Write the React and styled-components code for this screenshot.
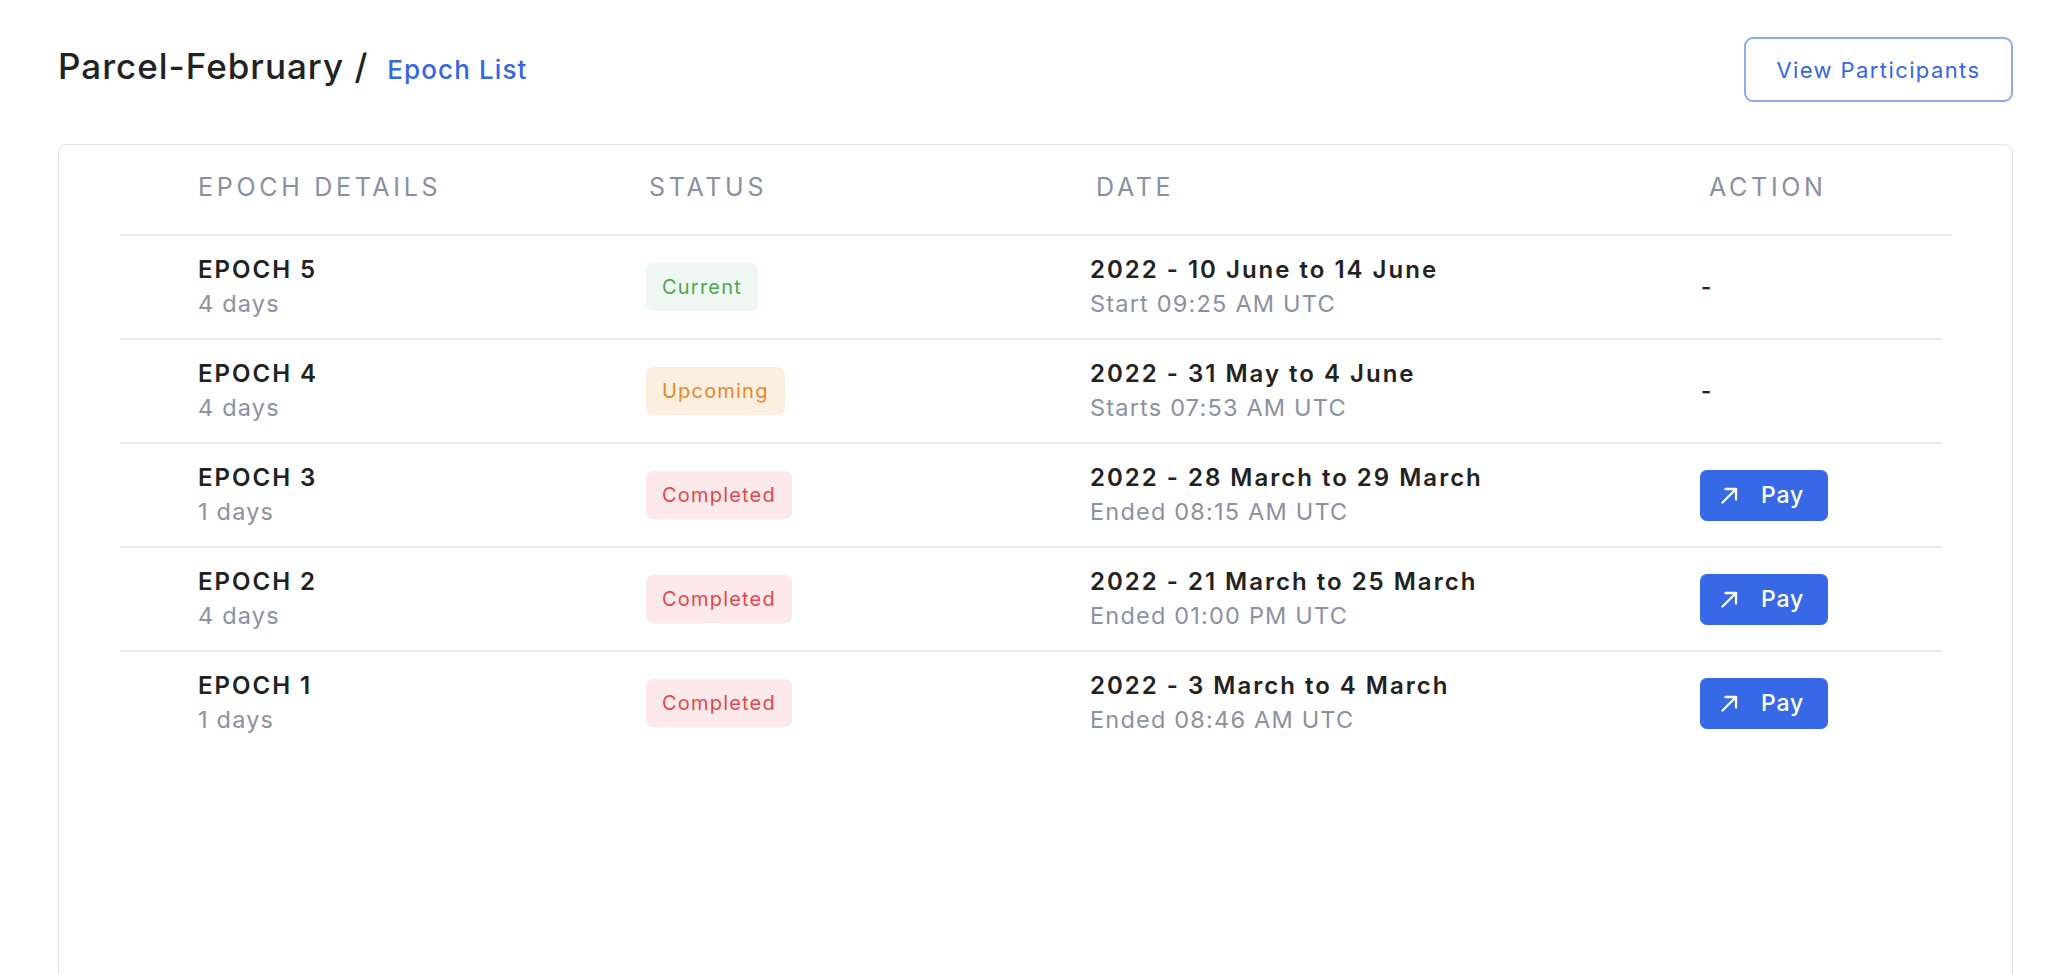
import React from 'react';
import styled, { createGlobalStyle } from 'styled-components';

const GlobalStyle = createGlobalStyle`
  body {
    margin: 0;
    background: #ffffff;
    font-family: Inter, "Noto Sans", sans-serif;
    color: #222222;
  }
`;

const Page = styled.div`
  padding: 37px 49px 0 58px;
`;

const TopBar = styled.div`
  display: flex;
  align-items: center;
  justify-content: space-between;
  height: 65px;
`;

const Breadcrumb = styled.div`
  display: flex;
  align-items: baseline;
  gap: 19px;
  margin-top: -8px;
`;

const Title = styled.h1`
  margin: 0;
  font-size: 35px;
  font-weight: 500;
  letter-spacing: 1px;
  color: #222222;
`;

const Crumb = styled.a`
  font-size: 26px;
  font-weight: 500;
  letter-spacing: 1.1px;
  color: #3566e3;
  text-decoration: none;
`;

const OutlineButton = styled.button`
  width: 269px;
  height: 65px;
  border: 2px solid #8eaaf1;
  border-radius: 9px;
  background: #ffffff;
  color: #3566e3;
  font-family: inherit;
  font-size: 22px;
  font-weight: 400;
  letter-spacing: 1.4px;
  cursor: pointer;
`;

const Card = styled.div`
  margin-top: 42px;
  min-height: 900px;
  border: 1px solid #e6e6e6;
  border-radius: 9px;
  padding: 0 70px 0 61px;
`;

const Row = styled.div`
  display: grid;
  grid-template-columns: 526px 446px 608px 1fr;
  align-items: center;
  height: ${p => (p.$head ? '89px' : '102px')};
  border-bottom: ${p => (p.$last ? 'none' : '2px solid #ebebeb')};
  margin-right: ${p => (p.$head ? '-10px' : '0')};
`;

const HeadCell = styled.div`
  font-size: 25px;
  font-weight: 400;
  letter-spacing: 3.7px;
  color: #8b90a0;
  padding-left: ${p => p.$pad}px;
  padding-bottom: 6px;
`;

const Cell = styled.div`
  padding-left: ${p => (p.$first ? '78px' : '0')};
  margin-left: ${p => (p.$shift ? '-2px' : '0')};
  display: flex;
  flex-direction: column;
`;

const MainText = styled.div`
  font-size: 24px;
  font-weight: 600;
  letter-spacing: 2px;
  line-height: 34px;
  color: #222222;
`;

const SubText = styled.div`
  font-size: 23.5px;
  font-weight: 400;
  letter-spacing: 1.2px;
  line-height: 34px;
  color: #8c91a1;
`;

const badgeColors = {
  Current: { bg: '#eef7f1', fg: '#4ca74f' },
  Upcoming: { bg: '#fcefdf', fg: '#e38a2e' },
  Completed: { bg: '#fde9ea', fg: '#e2474b' },
};

const Badge = styled.span`
  align-self: flex-start;
  display: inline-flex;
  align-items: center;
  height: 48px;
  padding: 0 16px;
  border-radius: 7px;
  font-size: 20px;
  letter-spacing: 1.2px;
  background: ${p => badgeColors[p.$status].bg};
  color: ${p => badgeColors[p.$status].fg};
`;

const PayButton = styled.button`
  align-self: flex-start;
  display: inline-flex;
  align-items: center;
  gap: 23px;
  width: 128px;
  height: 51px;
  padding: 0 0 0 21px;
  border: none;
  border-radius: 7px;
  background: #3768e5;
  color: #ffffff;
  font-family: inherit;
  font-size: 23px;
  font-weight: 500;
  letter-spacing: 0.8px;
  cursor: pointer;
`;

const Dash = styled.span`
  font-size: 22px;
  font-weight: 600;
  padding-left: 1px;
`;

const ArrowIcon = () => (
  <svg width="17" height="17" viewBox="0 0 17 17" fill="none" stroke="#ffffff" strokeWidth="2.3" strokeLinecap="round" strokeLinejoin="round">
    <path d="M1.5 15.5 L15 2" />
    <path d="M4.5 2 H15 V12.5" />
  </svg>
);

const epochs = [
  { name: 'EPOCH 5', days: '4 days', status: 'Current', date: '2022 - 10 June to 14 June', time: 'Start 09:25 AM UTC', pay: false },
  { name: 'EPOCH 4', days: '4 days', status: 'Upcoming', date: '2022 - 31 May to 4 June', time: 'Starts 07:53 AM UTC', pay: false },
  { name: 'EPOCH 3', days: '1 days', status: 'Completed', date: '2022 - 28 March to 29 March', time: 'Ended 08:15 AM UTC', pay: true },
  { name: 'EPOCH 2', days: '4 days', status: 'Completed', date: '2022 - 21 March to 25 March', time: 'Ended 01:00 PM UTC', pay: true },
  { name: 'EPOCH 1', days: '1 days', status: 'Completed', date: '2022 - 3 March to 4 March', time: 'Ended 08:46 AM UTC', pay: true },
];

export default function App() {
  return (
    <>
      <GlobalStyle />
      <Page>
        <TopBar>
          <Breadcrumb>
            <Title>Parcel-February /</Title>
            <Crumb href="#">Epoch List</Crumb>
          </Breadcrumb>
          <OutlineButton>View Participants</OutlineButton>
        </TopBar>
        <Card>
          <Row $head>
            <HeadCell $pad={78}>EPOCH DETAILS</HeadCell>
            <HeadCell $pad={3}>STATUS</HeadCell>
            <HeadCell $pad={4}>DATE</HeadCell>
            <HeadCell $pad={9}>ACTION</HeadCell>
          </Row>
          {epochs.map((e, i) => (
            <Row key={e.name} $last={i === epochs.length - 1}>
              <Cell $first>
                <MainText>{e.name}</MainText>
                <SubText>{e.days}</SubText>
              </Cell>
              <Cell>
                <Badge $status={e.status}>{e.status}</Badge>
              </Cell>
              <Cell $shift>
                <MainText>{e.date}</MainText>
                <SubText>{e.time}</SubText>
              </Cell>
              <Cell>
                {e.pay ? (
                  <PayButton>
                    <ArrowIcon />
                    Pay
                  </PayButton>
                ) : (
                  <Dash>-</Dash>
                )}
              </Cell>
            </Row>
          ))}
        </Card>
      </Page>
    </>
  );
}
